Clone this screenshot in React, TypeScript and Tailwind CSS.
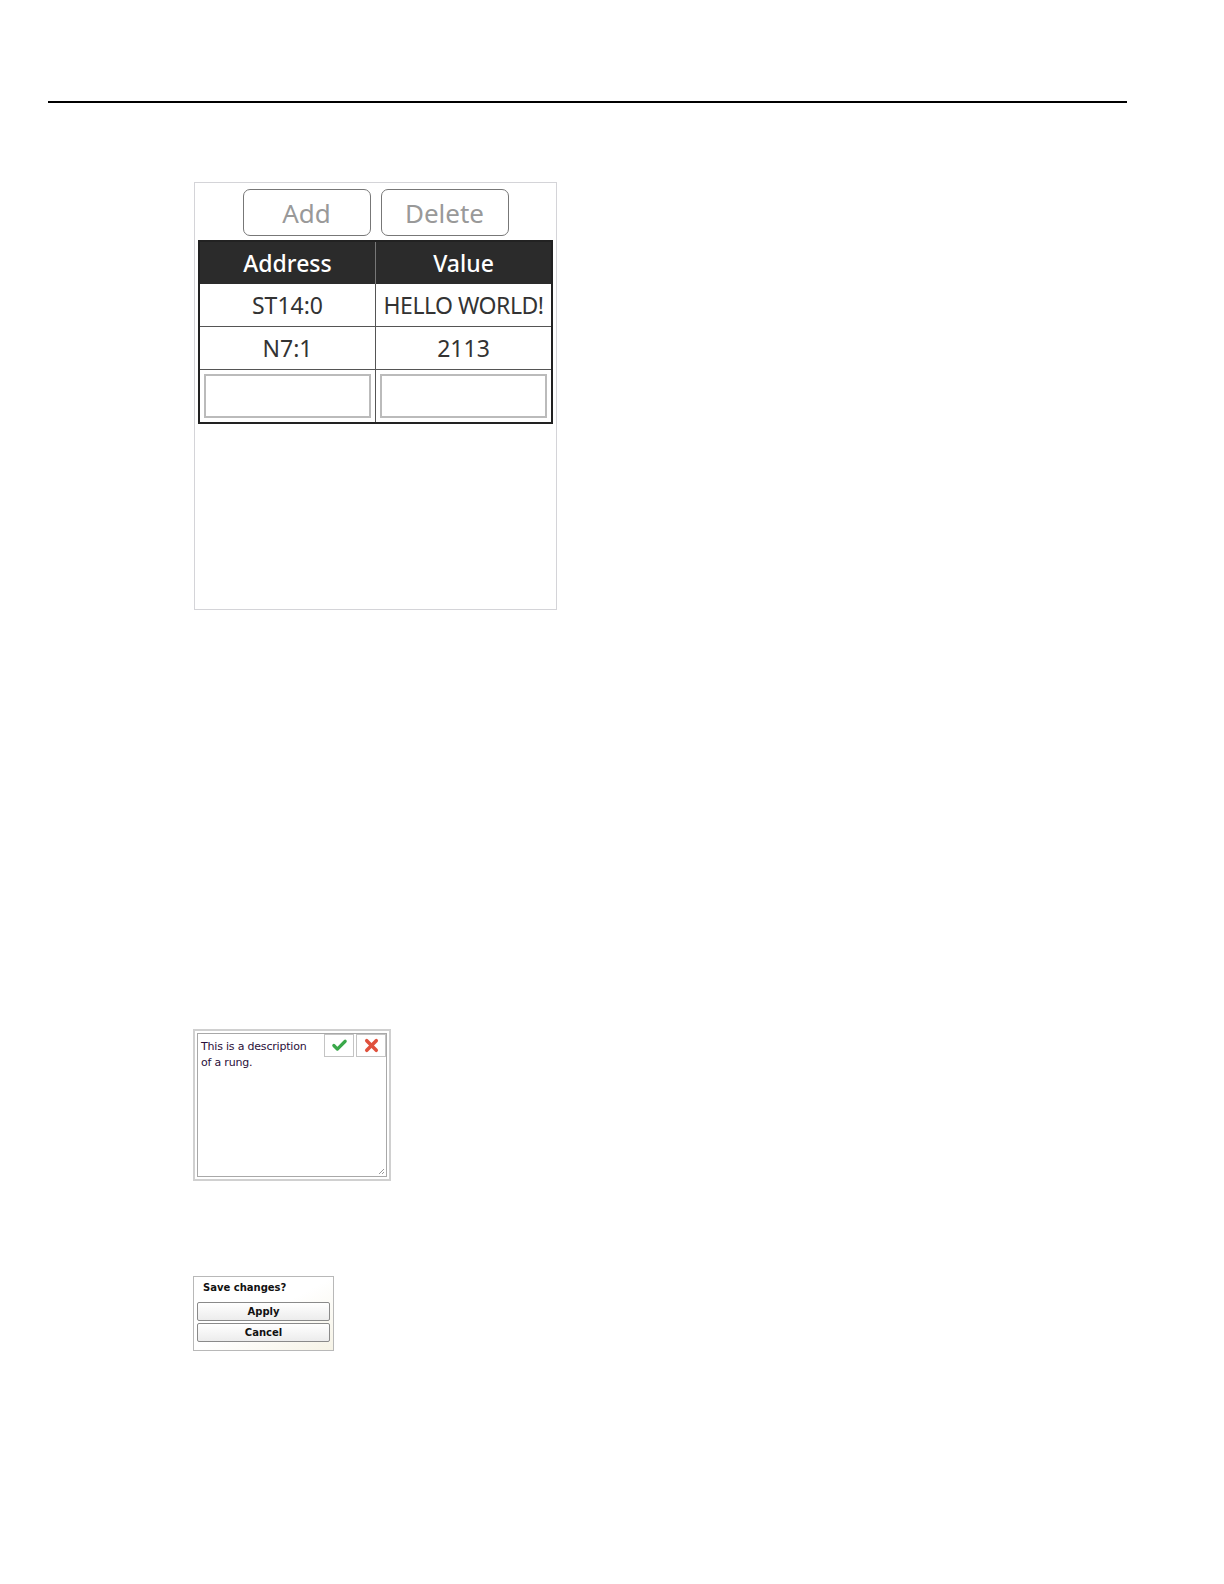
import { Check, X } from 'lucide-react'

export default function App() {
  return (
    <div className="bg-white pt-[101px] pb-[150px] font-['Noto_Sans',sans-serif]">
      <div className="ml-[48px] h-[2px] w-[1079px] bg-black" />

      {/* Address / value panel */}
      <div className="ml-[194px] mt-[79px] h-[428px] w-[363px] border border-[#d4d4d8] bg-white">
        <div className="flex justify-center gap-[10px] pt-[6px]">
          <button className="flex h-[47px] w-[128px] items-center justify-center rounded-[7px] border border-[#777] text-[26px] leading-none text-[#999]">
            Add
          </button>
          <button className="flex h-[47px] w-[128px] items-center justify-center rounded-[7px] border border-[#777] text-[26px] leading-none text-[#999]">
            Delete
          </button>
        </div>
        <div className="ml-[3px] mt-[4px] w-[355px] border-2 border-[#222]">
          <div className="grid h-[42px] grid-cols-[176px_1fr] bg-[#2b2b2b] text-[23px] font-medium text-white">
            <div className="flex items-center justify-center border-r border-[#777]">Address</div>
            <div className="flex items-center justify-center">Value</div>
          </div>
          <div className="grid h-[43px] grid-cols-[176px_1fr] border-b border-[#555] text-[23px] text-[#333]">
            <div className="flex items-center justify-center border-r border-[#555]">ST14:0</div>
            <div className="flex items-center justify-center whitespace-nowrap tracking-[-0.5px]">HELLO WORLD!</div>
          </div>
          <div className="grid h-[43px] grid-cols-[176px_1fr] border-b border-[#555] text-[23px] text-[#333]">
            <div className="flex items-center justify-center border-r border-[#555]">N7:1</div>
            <div className="flex items-center justify-center">2113</div>
          </div>
          <div className="grid h-[52px] grid-cols-[176px_1fr]">
            <div className="border-r border-[#555] p-[4px]">
              <div className="h-full w-full border-2 border-[#bbb]" />
            </div>
            <div className="p-[4px]">
              <div className="h-full w-full border-2 border-[#bbb]" />
            </div>
          </div>
        </div>
      </div>

      {/* Rung description editor */}
      <div className="ml-[193px] mt-[419px] h-[152px] w-[198px] border-2 border-[#d0d0d0] bg-white p-[2px]">
        <div className="relative h-full w-full border border-[#a8a8a8] px-[3px] pt-[5px] font-['DejaVu_Sans',sans-serif] text-[11px] leading-[16px] tracking-[-0.2px] text-[#2a0f3a]">
          <p className="w-[112px]">This is a description of a rung.</p>
          <div className="absolute right-[0px] top-[0px] flex gap-[2px]">
            <div className="flex h-[23px] w-[30px] items-center justify-center border border-[#c4c4c4] bg-white">
              <Check className="h-[17px] w-[17px] text-[#3aa84a]" strokeWidth={4.5} />
            </div>
            <div className="flex h-[23px] w-[30px] items-center justify-center border border-[#c4c4c4] bg-white">
              <X className="h-[19px] w-[19px] text-[#e0503c]" strokeWidth={4.5} />
            </div>
          </div>
          <svg className="absolute bottom-[1px] right-[1px]" width="7" height="7" viewBox="0 0 7 7">
            <path d="M6 1 L1 6 M6 4 L4 6" stroke="#999" strokeWidth="1" />
          </svg>
        </div>
      </div>

      {/* Save changes prompt */}
      <div className="ml-[193px] mt-[95px] h-[75px] w-[141px] border border-[#b8b8b8] bg-gradient-to-br from-white via-white to-[#f6f3e6] px-[3px] pt-[4px] font-['DejaVu_Sans',sans-serif] text-[10px] font-bold text-[#111]">
        <div className="pl-[6px] leading-[14px]">Save changes?</div>
        <div className="mt-[7px] flex flex-col gap-[2px]">
          <button className="h-[19px] w-[133px] rounded-[2px] border border-[#8a8a8a] bg-gradient-to-b from-white to-[#ececec] text-[10px] font-bold leading-none">
            Apply
          </button>
          <button className="h-[19px] w-[133px] rounded-[2px] border border-[#8a8a8a] bg-gradient-to-b from-white to-[#ececec] text-[10px] font-bold leading-none">
            Cancel
          </button>
        </div>
      </div>
    </div>
  )
}
